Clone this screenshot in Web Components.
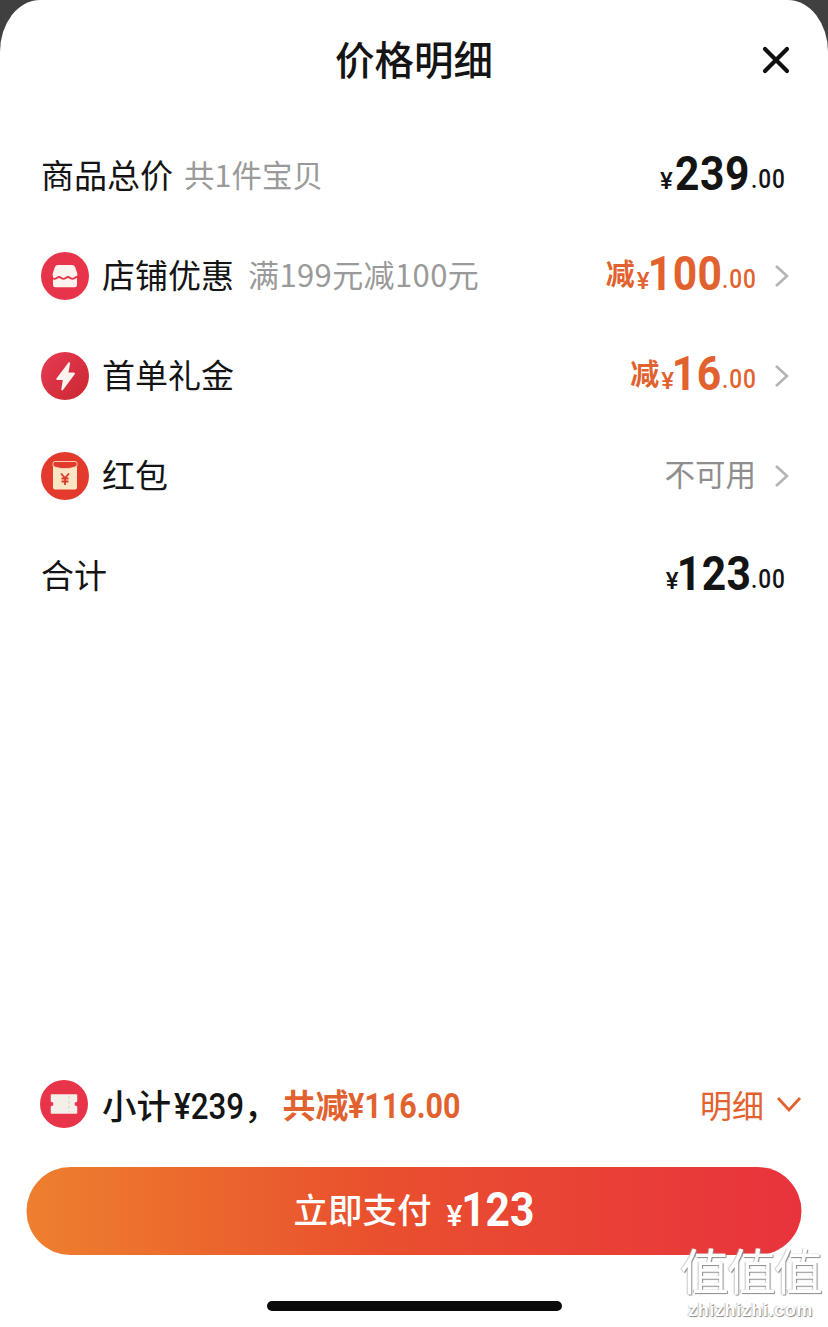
<!DOCTYPE html>
<html>
<head>
<meta charset="utf-8">
<style>
html,body{margin:0;padding:0;background:#404040;}
body{width:828px;height:1327px;overflow:hidden;font-family:"Noto Sans CJK SC","Noto Sans",sans-serif;}
</style>
</head>
<body>
<price-sheet>
  <sheet-header slot="top">价格明细</sheet-header>
  <price-row slot="top" label="商品总价" note="共1件宝贝"><money-text big="239" cents=".00"></money-text></price-row>
  <price-row slot="top" label="店铺优惠" note="满199元减100元" wide icon="shop" arrow><money-text cut big="100" cents=".00"></money-text></price-row>
  <price-row slot="top" label="首单礼金" icon="bolt" arrow><money-text cut big="16" cents=".00"></money-text></price-row>
  <price-row slot="top" label="红包" icon="packet" arrow><span style="color:#8e8e8e;font-size:30.500px;margin-bottom:6px">不可用</span></price-row>
  <price-row slot="top" label="合计"><money-text big="123" cents=".00"></money-text></price-row>
  <summary-bar slot="bottom"></summary-bar>
  <pay-button slot="bottom"></pay-button>
</price-sheet>
<script>
// no narrow font installed, so digits are Roboto squeezed sideways; the box width is set by hand
const NARROW=.87;
const narrow=(text,size,weight,spacing=0)=>{
  const trim=text[0]==="1"?size*.12:0;
  const w=[...text].reduce((sum,c)=>sum+(c==="."?.263:c==="¥"?.55:.5615)*size+spacing,0)*NARROW-trim;
  return `<span style="display:inline-block;width:${w}px;white-space:nowrap;font:${weight} ${size}px Roboto,sans-serif;letter-spacing:${spacing}px;transform:scaleX(${NARROW});transform-origin:${trim}px 50%;text-indent:-${trim}px">${text}</span>`;
};
const icons={
  shop:`<svg viewBox="0 0 48 48" width="48" height="48"><circle cx="24" cy="24" r="24" fill="#e8344a"/>
    <path d="M17 13h14a3.500 3.500 0 0 1 3.200 2.200l2 6c.3 1 .2 2-.2 3v8.500a2.500 2.500 0 0 1-2.500 2.500h-19a2.500 2.500 0 0 1-2.500-2.500v-8.500c-.4-1-.5-2-.2-3l2-6A3.500 3.500 0 0 1 17 13z" fill="#fdf3ee"/>
    <path d="M9 25c2 0 2.500 1.800 4.500 1.800s2.500-1.800 4.500-1.800 2.500 1.800 4.500 1.800 2.500-1.800 4.500-1.800 2.500 1.800 4.500 1.800 2.500-1.800 4.500-1.800 2 1.800 4 1.800" fill="none" stroke="#e8344a" stroke-width="1.800"/></svg>`,
  bolt:`<svg viewBox="0 0 48 48" width="48" height="48"><defs><linearGradient id="b" x1="0" x2="1" y1="0" y2="1"><stop offset="0" stop-color="#e83a55"/><stop offset="1" stop-color="#c9282f"/></linearGradient></defs><circle cx="24" cy="24" r="24" fill="url(#b)"/>
    <path d="M27.500 10.500c.8-.6 1.700 0 1.500 1L27.500 20.500h5.300c1 0 1.400 1 .9 1.800L22 38c-.7.9-1.900.4-1.700-.7l1.500-9.300h-5.300c-1 0-1.500-1-.9-1.800z" fill="#fdf3ee"/></svg>`,
  packet:`<svg viewBox="0 0 48 48" width="48" height="48"><circle cx="24" cy="24" r="24" fill="#e23a2c"/>
    <path d="M12 11.500a2 2 0 0 1 2-2h20a2 2 0 0 1 2 2v24a2 2 0 0 1-2 2H14a2 2 0 0 1-2-2z" fill="#fbe6c4"/>
    <path d="M12 11.500a2 2 0 0 1 2-2h20a2 2 0 0 1 2 2v2.500c-6.500 3.500-17.500 3.500-24 0z" fill="#e23a2c" stroke="#fbe6c4" stroke-width=".8"/>
    <path d="M20 21.500l4 4.500 4-4.500M24 26V33M20.500 26.500h7M20.500 29.500h7" fill="none" stroke="#d93a2a" stroke-width="1.800"/></svg>`,
  ticket:`<svg viewBox="0 0 48 48" width="48" height="48"><circle cx="24" cy="24" r="24" fill="#e8344a"/>
    <path d="M11.500 15h25v6.300a2.700 2.700 0 0 0 0 5.400V33h-25v-6.300a2.700 2.700 0 0 0 0-5.400z" fill="#f4efe9" stroke="#f4efe9" stroke-width="1.500" stroke-linejoin="round"/>
    <path d="M29 16v16" stroke="#dcd8d0" stroke-width="1.500" stroke-dasharray="2.500 2.500"/></svg>`
};

class PriceSheet extends HTMLElement{
  constructor(){
    super();
    this.attachShadow({mode:"open"}).innerHTML=`
<style>
:host{display:flex;flex-direction:column;position:relative;box-sizing:border-box;width:828px;height:1327px;background:#fff;border-radius:40px 40px 0 0 / 52px 52px 0 0;overflow:hidden;color:#141414;}
.top{flex:1;display:flex;flex-direction:column;}
.bottom{display:flex;flex-direction:column;}
.home{align-self:center;width:295px;height:10px;border-radius:5px;background:#0b0b0b;margin:46px 0 16px;}
.mark{position:absolute;right:7px;bottom:7px;display:flex;flex-direction:column;align-items:center;color:#fff;text-shadow:1px 1px 1px #8a8a8a,-1px 0 1px #c4c4c4;}
.mark b{font-size:49px;line-height:56px;font-weight:400;letter-spacing:-2px;margin-bottom:3px;}
.mark i{font:bold 18px/20px "Liberation Sans",sans-serif;letter-spacing:.6px;}
</style>
<div class="top"><slot name="top"></slot></div>
<div class="bottom"><slot name="bottom"></slot><div class="home"></div></div>
<div class="mark"><b>值值值</b><i>zhizhizhi.com</i></div>`;
  }
}

class SheetHeader extends HTMLElement{
  constructor(){
    super();
    this.attachShadow({mode:"open"}).innerHTML=`
<style>
:host{display:block;position:relative;height:120px;margin-bottom:6px;}
.title{text-align:center;font-size:39.500px;font-weight:500;line-height:116px;}
svg{position:absolute;right:37px;top:45px;}
</style>
<div class="title"><slot></slot></div>
<svg width="30" height="30" viewBox="0 0 30 30"><path d="M4 4l22 22M26 4L4 26" stroke="#111" stroke-width="4.200" stroke-linecap="round"/></svg>`;
  }
}

class PriceRow extends HTMLElement{
  constructor(){
    super();
    const root=this.attachShadow({mode:"open"});
    const icon=this.getAttribute("icon");
    const note=this.getAttribute("note");
    const arrow=this.hasAttribute("arrow");
    const wide=this.hasAttribute("wide");
    root.innerHTML=`
<style>
:host{display:flex;align-items:center;height:100px;padding:0 37px 0 41px;}
.icon{width:48px;height:48px;margin-right:13px;flex:none;}
.label{font-size:33px;font-weight:400;line-height:44px;padding-bottom:4px;}
.note{font-size:${wide?31:30.5}px;letter-spacing:${wide?.4:0}px;color:#9a9a9a;margin-left:${icon?14:11}px;line-height:44px;padding-bottom:4px;}
.right{margin-left:auto;display:flex;align-items:center;}
svg.arrow{margin-left:18px;margin-right:2px;}
.gap{width:6px;}
</style>
${icon?`<div class="icon">${icons[icon]}</div>`:""}
<span class="label">${this.getAttribute("label")}</span>
${note?`<span class="note">${note}</span>`:""}
<div class="right"><slot></slot>${arrow?`<svg class="arrow" width="15" height="24" viewBox="0 0 15 24"><path d="M2 2l11 10L2 22" fill="none" stroke="#b4b4b4" stroke-width="2.600"/></svg>`:`<span class="gap"></span>`}</div>`;
  }
}

class MoneyText extends HTMLElement{
  constructor(){
    super();
    const cut=this.hasAttribute("cut");
    this.attachShadow({mode:"open"}).innerHTML=`
<style>
:host{display:inline-flex;align-items:baseline;font-family:Roboto,sans-serif;color:${cut?"#e2622f":"#141414"};line-height:1;margin-bottom:5px;}
.cut{font-family:"Noto Sans CJK SC",sans-serif;font-size:29px;font-weight:700;margin-right:2px;transform:translateY(-5px);}
.yen{font-size:24px;font-weight:500;margin-right:2px;transform:translateY(-1px);}
.cents{margin-left:3px;transform:translateY(-2px);}
</style>
${cut?`<span class="cut">减</span>`:""}<span class="yen">¥</span><span class="big">${narrow(this.getAttribute("big"),49,700,.6)}</span><span class="cents">${narrow(this.getAttribute("cents"),26,500,1)}</span>`;
  }
}

class SummaryBar extends HTMLElement{
  constructor(){
    super();
    this.attachShadow({mode:"open"}).innerHTML=`
<style>
:host{display:flex;align-items:center;height:50px;padding:0 26px 0 40px;margin-bottom:38px;font-weight:500;}
.icon{width:48px;height:48px;margin-right:14px;flex:none;}
.sub{color:#141414;font-size:34.500px;display:flex;align-items:baseline;}
.sub .y{margin-left:3px;}
.cut{color:#e2622f;margin-left:4px;font-weight:700;font-size:33px;display:flex;align-items:baseline;}
.detail{margin-left:auto;display:flex;align-items:center;color:#e2622f;font-weight:400;font-size:32px;}
.detail svg{margin-left:12px;}
</style>
<div class="icon">${icons.ticket}</div>
<span class="sub">小计<span class="y">${narrow("¥239",36,500)}</span>，</span><span class="cut">共减${narrow("¥116.00",35,700)}</span>
<div class="detail">明细<svg width="26" height="16" viewBox="0 0 26 16"><path d="M2 2l11 12L24 2" fill="none" stroke="#e2622f" stroke-width="2.800"/></svg></div>`;
  }
}

class PayButton extends HTMLElement{
  constructor(){
    super();
    this.attachShadow({mode:"open"}).innerHTML=`
<style>
:host{display:flex;align-items:center;justify-content:center;align-self:center;width:775px;height:88px;border-radius:44px;background:linear-gradient(90deg,#ee7f2e 0%,#e9502e 45%,#e8333d 100%);color:#fff;transform:translateX(-.5px);}
.row{display:flex;align-items:baseline;transform:translateY(-2px);}
.t{font-size:34.500px;font-weight:500;transform:translate(-2px,-3px);}
.y{font:500 30px Roboto,sans-serif;margin:0 3px 0 13px;}
</style>
<div class="row"><span class="t">立即支付</span><span class="y">¥</span>${narrow("123",49,700)}</div>`;
  }
}

customElements.define("price-sheet",PriceSheet);
customElements.define("sheet-header",SheetHeader);
customElements.define("price-row",PriceRow);
customElements.define("money-text",MoneyText);
customElements.define("summary-bar",SummaryBar);
customElements.define("pay-button",PayButton);
</script>
</body>
</html>
